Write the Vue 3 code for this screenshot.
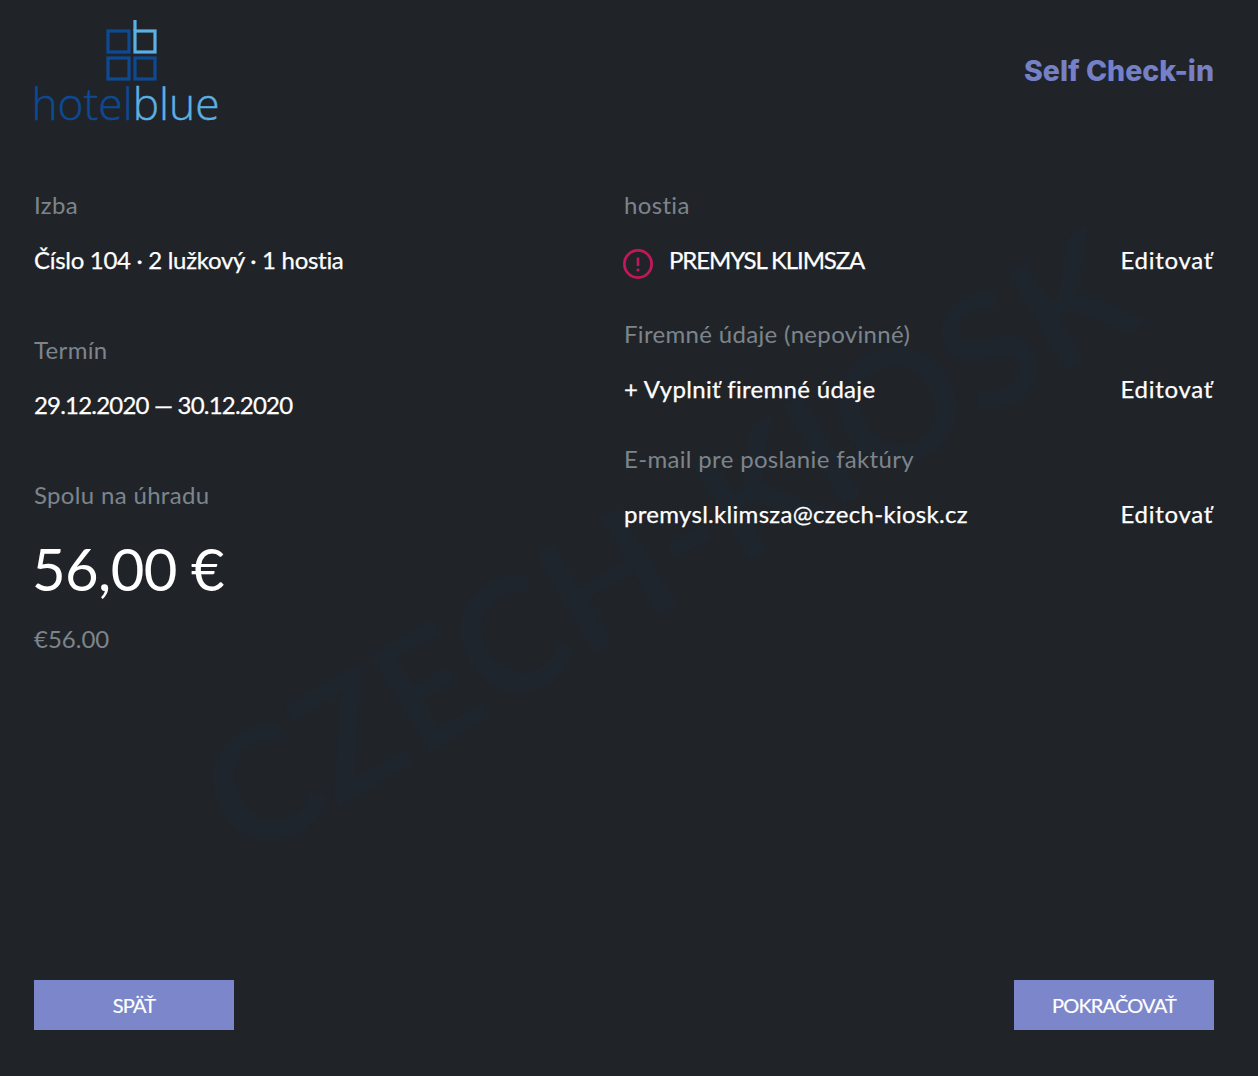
<script setup>
const leftBlocks = [
  { label: 'Izba', value: 'Číslo 104 · 2 lužkový · 1 hostia', cls: 'tight-1' },
  { label: 'Termín', value: '29.12.2020 — 30.12.2020', cls: 'tight-2' },
]
const companyRows = [
  { label: 'Firemné údaje (nepovinné)', value: '+ Vyplniť firemné údaje', cls: '' },
  { label: 'E-mail pre poslanie faktúry', value: 'premysl.klimsza@czech-kiosk.cz', cls: '' },
]
</script>

<template>
  <div class="page">
    <div class="watermark">CZECH-KIOSK</div>

    <header class="header">
      <div class="logo">
        <svg class="logo-mark" width="54" height="62" viewBox="0 0 54 62" fill="none" stroke-width="3.2">
          <rect x="2" y="11" width="21" height="21" stroke="#0e4a94" />
          <rect x="29" y="11" width="20" height="21" stroke="#5cb0e4" />
          <path d="M29 0V11" stroke="#5cb0e4" />
          <rect x="2" y="38" width="21" height="21" stroke="#0e4a94" />
          <rect x="29" y="38" width="20" height="21" stroke="#0e4a94" />
        </svg>
        <div class="logo-text"><span class="dark">hotel</span><span class="light">blue</span></div>
      </div>
      <div class="title">Self Check-in</div>
    </header>

    <main class="columns">
      <section>
        <div v-for="b in leftBlocks" :key="b.label" class="left-block">
          <div class="label">{{ b.label }}</div>
          <div class="value" :class="b.cls">{{ b.value }}</div>
        </div>
        <div class="label">Spolu na úhradu</div>
        <div class="total">56,00 €</div>
        <div class="label converted">€56.00</div>
      </section>

      <section>
        <div class="label">hostia</div>
        <div class="row guest-row">
          <div class="guest">
            <svg width="32" height="32" viewBox="0 0 32 32" fill="none">
              <circle cx="16" cy="16" r="13.6" stroke="#c2185b" stroke-width="2.8" />
              <path d="M16 9.5V18" stroke="#c2185b" stroke-width="2.6" />
              <circle cx="16" cy="22" r="1.6" fill="#c2185b" />
            </svg>
            <span class="value name">PREMYSL KLIMSZA</span>
          </div>
          <a class="value edit">Editovať</a>
        </div>
        <div v-for="r in companyRows" :key="r.label">
          <div class="label">{{ r.label }}</div>
          <div class="row">
            <span class="value" :class="r.cls">{{ r.value }}</span>
            <a class="value edit">Editovať</a>
          </div>
        </div>
      </section>
    </main>

    <footer class="footer">
      <button>SPÄŤ</button>
      <button>POKRAČOVAŤ</button>
    </footer>
  </div>
</template>

<style>
body {
  margin: 0;
  background: #202429;
}
</style>

<style scoped>
.page {
  position: relative;
  height: 1076px;
  box-sizing: border-box;
  padding: 20px 44px 46px 34px;
  display: flex;
  flex-direction: column;
  overflow: hidden;
  background: #202429;
  font-family: Lato, "Liberation Sans", sans-serif;
  color: #fff;
}

.watermark {
  position: absolute;
  left: 144px;
  top: 474px;
  width: 1000px;
  text-align: center;
  font-size: 158px;
  line-height: 1;
  font-weight: 700;
  white-space: nowrap;
  color: #1e252d;
  transform: rotate(-31deg);
}

.header {
  position: relative;
  height: 151px;
  display: flex;
  justify-content: space-between;
  align-items: flex-start;
}

.logo {
  width: 186px;
  display: flex;
  flex-direction: column;
  align-items: center;
}

.logo-mark {
  margin-left: 12px;
  display: block;
}

.logo-text {
  font-family: "Open Sans", sans-serif;
  font-weight: 300;
  font-size: 44.3px;
  line-height: 40px;
  margin-top: 1px;
  margin-left: -3px;
  -webkit-text-stroke: 0.4px;
}

.dark {
  color: #0e4a94;
}

.light {
  color: #5cb0e4;
}

.title {
  margin-top: 33px;
  font-family: Inter, sans-serif;
  font-size: 28.5px;
  line-height: 36px;
  font-weight: 800;
  color: #7580c6;
}

.columns {
  position: relative;
  flex: 1;
  display: grid;
  grid-template-columns: 590px 590px;
}

.label {
  font-size: 24px;
  line-height: 30px;
  letter-spacing: 0.33px;
  color: #7d848c;
  margin-top: 19px;
}

.value {
  font-size: 24px;
  line-height: 30px;
  letter-spacing: 0.3px;
  color: #fff;
  -webkit-text-stroke: 0.25px;
}

.edit {
  letter-spacing: 0.7px;
  margin-right: 1px;
}

.tight-1 {
  letter-spacing: -0.3px;
}

.tight-2 {
  letter-spacing: -0.8px;
}

.name {
  letter-spacing: -1.1px;
}

.left-block {
  height: 126px;
}

.left-block .value {
  margin-top: 25px;
}

.total {
  margin-top: 24px;
  margin-left: -2px;
  font-size: 58px;
  line-height: 70px;
  letter-spacing: -0.6px;
}

.converted {
  margin-top: 20px;
  letter-spacing: 0;
}

.row {
  display: flex;
  justify-content: space-between;
  align-items: center;
  margin-top: 25px;
  height: 30px;
  margin-bottom: 40px;
}

.guest-row {
  margin-bottom: 44px;
}

.guest {
  display: flex;
  align-items: center;
  gap: 15px;
  margin-left: -2px;
}

.guest svg {
  margin-top: 7px;
}

.footer {
  position: relative;
  display: flex;
  justify-content: space-between;
}

button {
  width: 200px;
  height: 50px;
  border: none;
  padding: 0;
  background: #7b86cb;
  color: #fff;
  font-family: Lato, sans-serif;
  font-size: 20px;
  letter-spacing: -0.8px;
  -webkit-text-stroke: 0.2px;
}
</style>
